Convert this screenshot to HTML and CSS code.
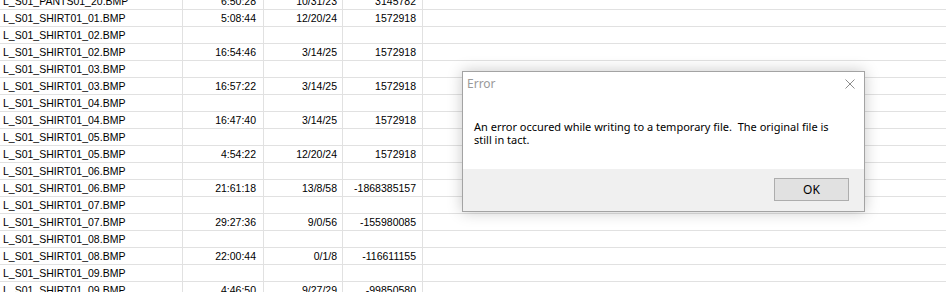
FILE: index.html
```html
<!DOCTYPE html>
<html>
<head>
<meta charset="utf-8">
<link rel="stylesheet" href="styles.css">
</head>
<body>
<div class="sheet">
  <div class="row"><div class="c a">L_S01_PANTS01_20.BMP</div><div class="c b">6:50:28</div><div class="c cc">10/31/23</div><div class="c d">3145782</div><div class="c e"></div></div>
  <div class="row"><div class="c a">L_S01_SHIRT01_01.BMP</div><div class="c b">5:08:44</div><div class="c cc">12/20/24</div><div class="c d">1572918</div><div class="c e"></div></div>
  <div class="row"><div class="c a">L_S01_SHIRT01_02.BMP</div><div class="c b"></div><div class="c cc"></div><div class="c d"></div><div class="c e"></div></div>
  <div class="row"><div class="c a">L_S01_SHIRT01_02.BMP</div><div class="c b">16:54:46</div><div class="c cc">3/14/25</div><div class="c d">1572918</div><div class="c e"></div></div>
  <div class="row"><div class="c a">L_S01_SHIRT01_03.BMP</div><div class="c b"></div><div class="c cc"></div><div class="c d"></div><div class="c e"></div></div>
  <div class="row"><div class="c a">L_S01_SHIRT01_03.BMP</div><div class="c b">16:57:22</div><div class="c cc">3/14/25</div><div class="c d">1572918</div><div class="c e"></div></div>
  <div class="row"><div class="c a">L_S01_SHIRT01_04.BMP</div><div class="c b"></div><div class="c cc"></div><div class="c d"></div><div class="c e"></div></div>
  <div class="row"><div class="c a">L_S01_SHIRT01_04.BMP</div><div class="c b">16:47:40</div><div class="c cc">3/14/25</div><div class="c d">1572918</div><div class="c e"></div></div>
  <div class="row"><div class="c a">L_S01_SHIRT01_05.BMP</div><div class="c b"></div><div class="c cc"></div><div class="c d"></div><div class="c e"></div></div>
  <div class="row"><div class="c a">L_S01_SHIRT01_05.BMP</div><div class="c b">4:54:22</div><div class="c cc">12/20/24</div><div class="c d">1572918</div><div class="c e"></div></div>
  <div class="row"><div class="c a">L_S01_SHIRT01_06.BMP</div><div class="c b"></div><div class="c cc"></div><div class="c d"></div><div class="c e"></div></div>
  <div class="row"><div class="c a">L_S01_SHIRT01_06.BMP</div><div class="c b">21:61:18</div><div class="c cc">13/8/58</div><div class="c d">-1868385157</div><div class="c e"></div></div>
  <div class="row"><div class="c a">L_S01_SHIRT01_07.BMP</div><div class="c b"></div><div class="c cc"></div><div class="c d"></div><div class="c e"></div></div>
  <div class="row"><div class="c a">L_S01_SHIRT01_07.BMP</div><div class="c b">29:27:36</div><div class="c cc">9/0/56</div><div class="c d">-155980085</div><div class="c e"></div></div>
  <div class="row"><div class="c a">L_S01_SHIRT01_08.BMP</div><div class="c b"></div><div class="c cc"></div><div class="c d"></div><div class="c e"></div></div>
  <div class="row"><div class="c a">L_S01_SHIRT01_08.BMP</div><div class="c b">22:00:44</div><div class="c cc">0/1/8</div><div class="c d">-116611155</div><div class="c e"></div></div>
  <div class="row"><div class="c a">L_S01_SHIRT01_09.BMP</div><div class="c b"></div><div class="c cc"></div><div class="c d"></div><div class="c e"></div></div>
  <div class="row"><div class="c a">L_S01_SHIRT01_09.BMP</div><div class="c b">4:46:50</div><div class="c cc">9/27/29</div><div class="c d">-99850580</div><div class="c e"></div></div>
</div>

<div class="dialog">
  <div class="dlg-head">
    <span class="dlg-title">Error</span>
    <svg class="dlg-close" width="10" height="10" viewBox="0 0 10 10"><path d="M0.5 0.5 L9.5 9.5 M9.5 0.5 L0.5 9.5" stroke="#8c8c8c" stroke-width="1" fill="none"/></svg>
  </div>
  <div class="dlg-body"><p class="dlg-msg">An error occured while writing to a temporary file.&nbsp; The original file is still in tact.</p></div>
  <div class="dlg-foot"><button class="dlg-btn">OK</button></div>
</div>
</body>
</html>
```

FILE: styles.css
```css
html, body {
  margin: 0;
  padding: 0;
  background: #ffffff;
  overflow: hidden;
  width: 946px;
  height: 292px;
}

.sheet {
  margin-top: -7px;
  font-family: "Liberation Sans", Arial, sans-serif;
  font-size: 10.5px;
  color: #000;
}

.row {
  display: flex;
  height: 17px;
}

.c {
  box-sizing: border-box;
  height: 17px;
  line-height: 16px;
  border-bottom: 1px solid #e1e1e1;
  border-right: 1px solid #e1e1e1;
  white-space: nowrap;
  overflow: hidden;
}

.a { width: 183px; padding-left: 3px; }
.b { width: 81px; text-align: right; padding-right: 7px; }
.cc { width: 79px; text-align: right; padding-right: 5px; }
.d { width: 80px; text-align: right; padding-right: 6px; }
.e { flex: 1; border-right: none; }

.dialog {
  position: absolute;
  left: 462px;
  top: 71px;
  width: 403px;
  height: 141px;
  box-sizing: border-box;
  border: 1px solid #a3a3a3;
  background: #ffffff;
  box-shadow: 0 0 14px rgba(0, 0, 0, 0.22);
  display: flex;
  flex-direction: column;
  font-family: "Noto Sans", "Open Sans", sans-serif;
  font-size: 12px;
}

.dlg-head {
  height: 23px;
  display: flex;
  align-items: center;
  justify-content: space-between;
  padding: 0 9px 0 4px;
}

.dlg-title {
  color: #9a9a9a;
  line-height: 15px;
}

.dlg-close {
  display: block;
}

.dlg-body {
  flex: 1;
  padding: 25px 11px 0 11px;
}

.dlg-msg {
  margin: 0;
  font-size: 11px;
  line-height: 13px;
  color: #000;
  width: 366px;
}

.dlg-foot {
  height: 42px;
  background: #f0f0f0;
  display: flex;
  justify-content: flex-end;
  align-items: flex-start;
  padding: 9px 15px 0 0;
  box-sizing: border-box;
}

.dlg-btn {
  width: 75px;
  height: 23px;
  box-sizing: border-box;
  border: 1px solid #adadad;
  background: #e1e1e1;
  font-family: "Noto Sans", "Open Sans", sans-serif;
  font-size: 12px;
  color: #000;
  padding: 0;
  margin: 0;
}
```
